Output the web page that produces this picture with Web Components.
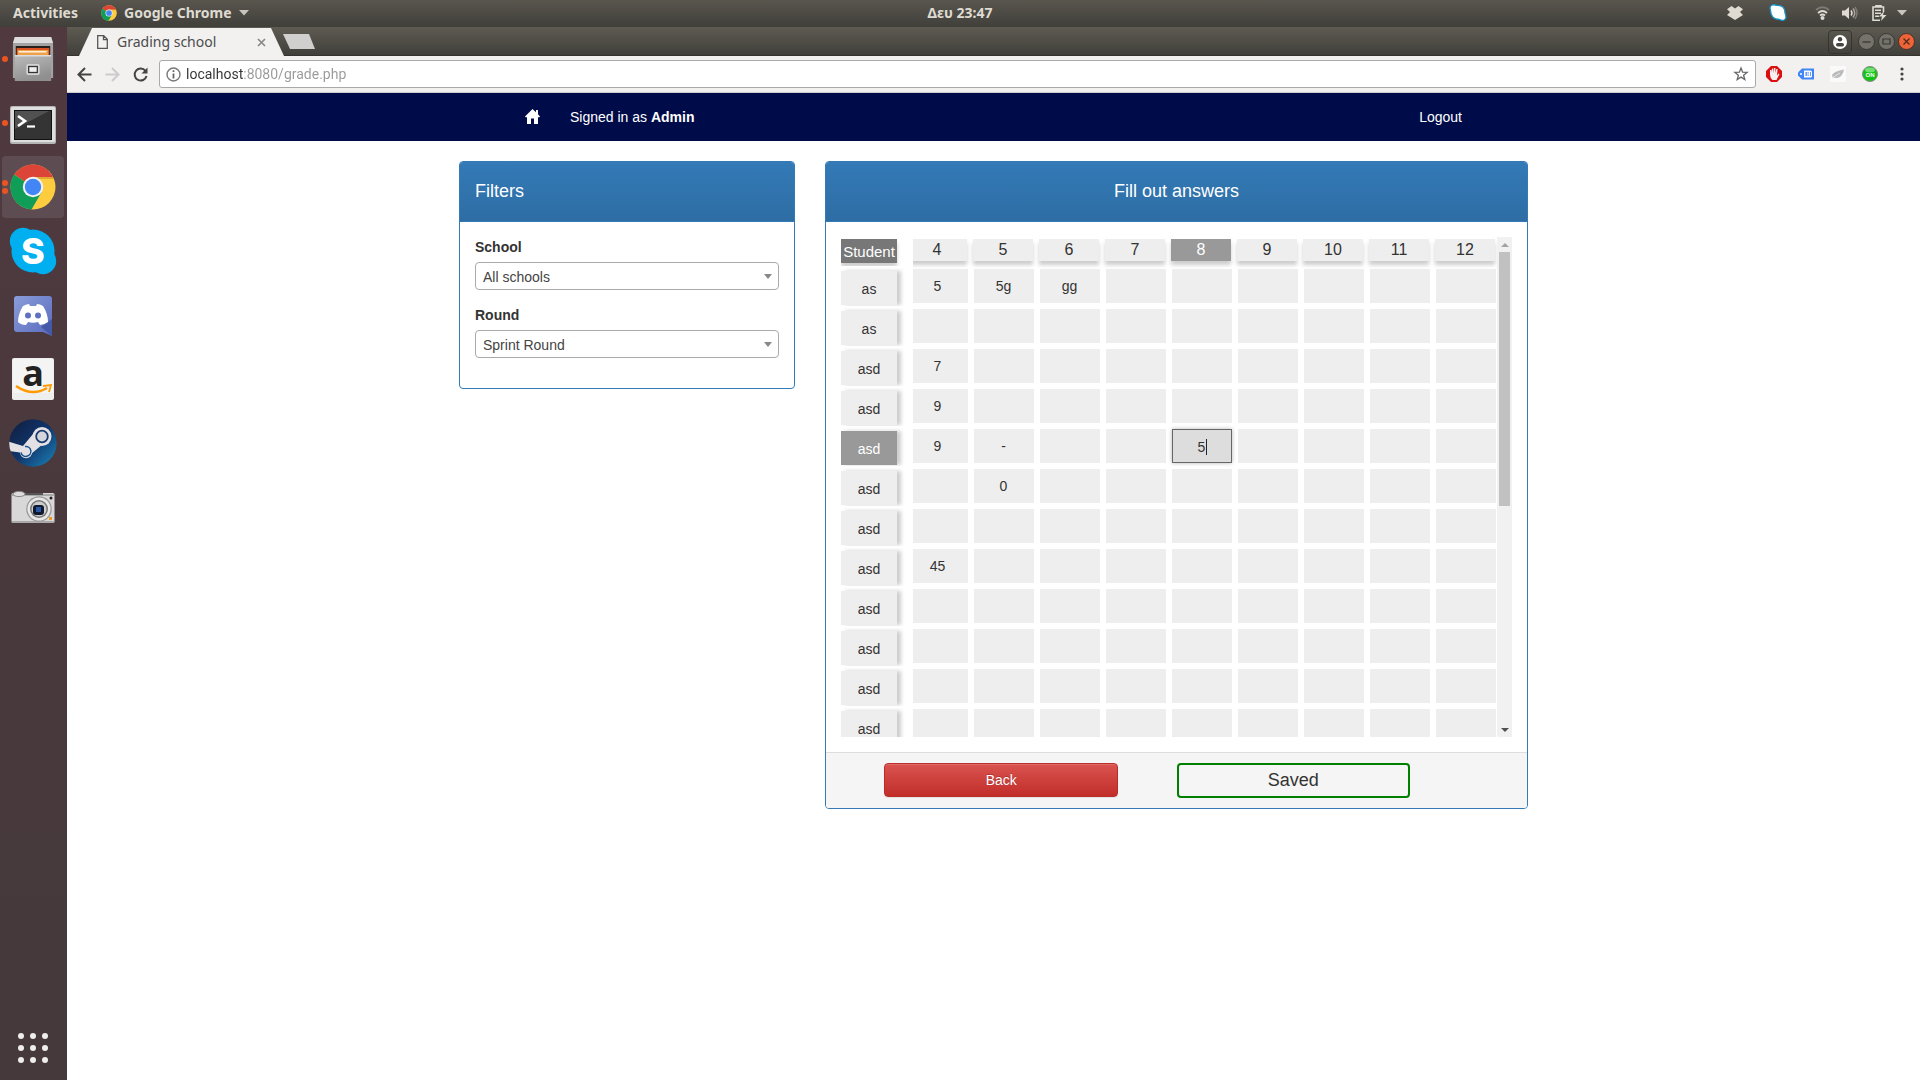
<!DOCTYPE html>
<html lang="en">
<head>
<meta charset="utf-8">
<title>Grading school</title>
<style>
  body { margin: 0; background: #fff; color: #333; font: 14px/20px "Liberation Sans", Arial, sans-serif; }
</style>
</head>
<body>
<desktop-shell>
  <top-bar slot="top"></top-bar>
  <side-dock slot="dock"></side-dock>
  <browser-tabs></browser-tabs>
  <browser-toolbar></browser-toolbar>
  <app-nav></app-nav>
  <page-columns>
    <app-panel slot="side">
      <span slot="title">Filters</span>
      <filter-select name="School" value="All schools"></filter-select>
      <filter-select name="Round" value="Sprint Round"></filter-select>
    </app-panel>
    <app-panel slot="main" centered>
      <span slot="title">Fill out answers</span>
      <answers-grid></answers-grid>
      <panel-actions slot="footer"></panel-actions>
    </app-panel>
  </page-columns>
</desktop-shell>

<script>
const define = (name, html, setup) => {
  const template = document.createElement('template');
  template.innerHTML = '<style>:host,*{box-sizing:border-box}button{font:inherit;padding:0;border:0;background:none;color:inherit;cursor:pointer}svg{display:block;flex:none;overflow:visible}</style>' + html;
  customElements.define(name, class extends HTMLElement {
    connectedCallback() {
      if (this.shadowRoot) return;
      const root = this.attachShadow({ mode: 'open' });
      root.append(template.content.cloneNode(true));
      if (setup) setup(root, this);
    }
  });
};

const chromeLogo = size => `<svg width="${size}" height="${size}" viewBox="0 0 46 46" aria-hidden="true">
  <circle cx="23" cy="23" r="22.5" fill="#fdcc3f"/>
  <path d="M23 23 4.2 10.6A22.5 22.5 0 0 1 43 13H23Z" fill="#db4437"/>
  <path d="M23 23 4.2 10.6A22.5 22.5 0 0 0 21.500 45.500L31.700 28Z" fill="#109d58"/>
  <path d="M23 13h20l.8 2H26Z" fill="#8a3a10" opacity=".25"/>
  <circle cx="23" cy="23" r="10.200" fill="#f2f2f2"/><circle cx="23" cy="23" r="8.200" fill="#4285f4"/></svg>`;

define('desktop-shell', `<style>
  :host { display: flex; flex-direction: column; min-height: 100vh; }
  .row { display: flex; flex: 1; }
  main { flex: 1; min-width: 0; display: flex; flex-direction: column; }
</style>
<slot name="top"></slot>
<div class="row"><slot name="dock"></slot><main><slot></slot></main></div>`);

define('top-bar', `<style>
  :host { display: grid; grid-template-columns: 1fr auto 1fr; align-items: center; height: 27px; padding: 0 13px 1px;
    background: linear-gradient(#59564e, #403f3a); color: #dfdbd2; font: bold 14px/20px "Noto Sans", sans-serif; }
  .left, .right { display: flex; align-items: center; }
  .right { justify-content: flex-end; }
  .app { display: flex; align-items: center; margin-left: 23px; gap: 7px; }
  .drop { margin-right: 26px; } .skype { margin-right: 28px; } .wifi { margin-right: 12px; } .vol { margin-right: 14px; } .bat { margin-right: 10px; }
</style>
<div class="left"><button>Activities</button>
 <button class="app">${chromeLogo(16)}<span>Google Chrome</span><svg width="10" height="6"><path d="M0 0h10L5 5.500Z" fill="#c9c5bd"/></svg></button></div>
<button>Δευ 23:47</button>
<div class="right">
 <svg class="drop" width="16" height="14" viewBox="0 0 16 14"><path d="M4.500 0 8 2.500 11.500 0 16 3.200 13 6l3 3-4 2.400L8 14l-4-2.600L0 9l3-3-3-2.800Z" fill="#dfdbd2"/></svg>
 <svg class="skype" width="18" height="18" viewBox="0 0 18 18"><path d="M1.500 6.500Q0 2 3.500 1q2-.6 4 .4Q16 1 16 9q2.500 6-1.500 7.300-2 .4-4-.8Q2 15.500 1.500 6.500Z" fill="#fff" stroke="#1593c9" stroke-width="1.300"/></svg>
 <svg class="wifi" width="15" height="14" viewBox="0 0 15 14" fill="none"><path d="M1 4Q7.500-1.500 14 4" stroke="#7d7b75" stroke-width="2"/><path d="M3 7q4.500-4 9 0M5 9.500q2.500-2 5 0" stroke="#dfdbd2" stroke-width="1.700"/><circle cx="7.500" cy="12" r="2" fill="#dfdbd2"/></svg>
 <svg class="vol" width="16" height="14" viewBox="0 0 16 14" fill="none"><path d="M0 4.500h3L7 1v12L3 9.500H0Z" fill="#dfdbd2"/><path d="M9 4.500q2 2.500 0 5" stroke="#dfdbd2" stroke-width="1.500"/><path d="M11 2.500q3.500 4.500 0 9" stroke="#aaa7a0" stroke-width="1.500"/><path d="M13 1q4 6 0 12" stroke="#7d7b75" stroke-width="1.500"/></svg>
 <svg class="bat" width="15" height="16" viewBox="0 0 15 16"><path d="M4 2V.7h5V2h2.500v5M8 15.200H1V2h10" fill="none" stroke="#dfdbd2" stroke-width="1.600"/><path d="M3 4.500h6v1.600H3zm0 3h6v1.600H3zm0 3h4v1.600H3zM12 6l-5 5.500h3L9 16l5.500-6H11Z" fill="#dfdbd2"/></svg>
 <svg width="10" height="6"><path d="M0 0h10L5 5.500Z" fill="#c9c5bd"/></svg>
</div>`);

define('side-dock', `<style>
  :host { display: flex; flex-direction: column; width: 67px; background: linear-gradient(#50393f, #47393c 60%, #46393c); }
  button { position: relative; height: 64px; width: 66px; padding: 1px 2px; display: block; }
  .tile { display: flex; width: 62px; height: 62px; align-items: center; justify-content: center; border-radius: 4px; }
  .on .tile { background: #5d4d53; }
  .dots { position: absolute; left: 2px; top: 0; height: 64px; display: flex; flex-direction: column; justify-content: center; gap: 2px; }
  .dots i { width: 6px; height: 6px; border-radius: 3px; background: #eb5421; }
  .apps { margin-top: auto; }
</style>
<button aria-label="Files"><span class="tile"><svg width="44" height="46" viewBox="0 0 46 46" preserveAspectRatio="none">
 <defs><linearGradient id="m" x2=".4" y2="1"><stop stop-color="#bcbcbc"/><stop offset="1" stop-color="#8f8f8f"/></linearGradient></defs>
 <path d="M4 1h38l2 7v34H2V8Z" fill="#a3a3a3"/><path d="M4 1h38l2 6H2Z" fill="#ddd"/><path d="M5 10h36v11H5Z" fill="#26201d"/><path d="M6 12h34v9H6Z" fill="#d9521f"/><path d="M7 14h32v7H7Z" fill="#f0a04b"/><path d="M8 15h29v1.500H8Z" fill="#fff2dc"/>
 <path d="M4 19h38v26H4Z" fill="url(#m)"/><path d="M4 19h38v1.500H4Z" fill="#dcdcdc"/><rect x="16" y="28" width="14" height="11" rx="2" fill="#d4d4d4"/><rect x="18.500" y="30.500" width="9" height="6" fill="#eee" stroke="#333" stroke-width="1.300"/></svg></span><span class="dots"><i></i></span></button>
<button aria-label="Terminal"><span class="tile"><svg width="46" height="44" viewBox="0 -4 46 44">
 <rect y="1" width="46" height="38" rx="2" fill="#b5b5b5"/><rect x="1" y="2" width="44" height="35" rx="1" fill="#dedede"/><rect x="4" y="5" width="38" height="30" fill="#111"/><rect x="5" y="6" width="36" height="28" fill="#343434"/><path d="M5 6h34L5 24Z" fill="#666" opacity=".6"/>
 <path d="m8 11 7 5-7 5" fill="none" stroke="#fff" stroke-width="2.600"/><path d="M17 21.500h8" stroke="#fff" stroke-width="2.200"/></svg></span><span class="dots"><i></i></span></button>
<button class="on" aria-label="Google Chrome"><span class="tile">${chromeLogo(46)}</span><span class="dots"><i></i><i></i></span></button>
<button aria-label="Skype"><span class="tile"><svg width="48" height="48" viewBox="0 0 48 48"><g fill="#00aff0"><circle cx="24" cy="24" r="21.500"/><circle cx="14" cy="14" r="13.200"/><circle cx="34" cy="34" r="13.200"/></g>
 <text x="24" y="37" text-anchor="middle" font-family="Inter, sans-serif" font-weight="800" font-size="36" fill="#fff">S</text></svg></span></button>
<button aria-label="Discord"><span class="tile"><svg width="40" height="44" viewBox="0 -2 40 44"><defs><linearGradient id="d" y2="1"><stop stop-color="#8a9cd9"/><stop offset="1" stop-color="#596bbd"/></linearGradient></defs>
 <path d="M4 1h32q3 0 3 3v37l-9-4H4q-3 0-3-3V4q0-3 3-3Z" fill="url(#d)"/><path d="m28 32 11 9V24Z" fill="#4559a8"/>
 <path d="M10 11q4-2 6-2l1 2h6l1-2q3 0 6 2 5 8 5 16-4 3-8 3l-2-3q-5 1.500-10 0l-2 3q-5 0-8-3 0-8 5-16Z" fill="#fff"/><circle cx="15" cy="20.500" r="3" fill="#5f72c2"/><circle cx="25" cy="20.500" r="3" fill="#5f72c2"/></svg></span></button>
<button aria-label="Amazon"><span class="tile"><svg width="42" height="42" viewBox="0 0 42 42"><rect width="42" height="42" rx="2" fill="#eee"/><rect x="1" y="1" width="40" height="34" fill="#f4f4f4"/>
 <text x="21" y="28" text-anchor="middle" font-family="Open Sans,sans-serif" font-weight="bold" font-size="36" fill="#222">a</text>
 <path d="M4 28q16 11 31 2" fill="none" stroke="#f90" stroke-width="2.600"/><path d="m31 28 8-1-2 7" fill="none" stroke="#f90" stroke-width="1.800"/></svg></span></button>
<button aria-label="Steam"><span class="tile"><svg width="48" height="48" viewBox="0 0 48 48"><defs><linearGradient id="s" y2="1"><stop stop-color="#101c3c"/><stop offset=".5" stop-color="#10356b"/><stop offset="1" stop-color="#1b87bc"/></linearGradient><clipPath id="c"><circle cx="24" cy="24" r="23.800"/></clipPath></defs>
 <g clip-path="url(#c)"><circle cx="24" cy="24" r="24" fill="url(#s)"/><path d="m-2 22 16 5 10-12 10 10-12 10L0 32Z" fill="#e4e1e4"/></g>
 <circle cx="33" cy="17.500" r="9.500" fill="#e4e1e4"/><circle cx="33" cy="17.500" r="5.800" fill="#d5d5dc" stroke="#153a6e" stroke-width="1.800"/><circle cx="17" cy="33" r="6.200" fill="#e4e1e4"/><path d="M12 33.500a5 5 0 1 0 4-6" fill="none" stroke="#15518c" stroke-width="1.500"/></svg></span></button>
<button aria-label="Camera"><span class="tile"><svg width="44" height="34" viewBox="0 0 44 34"><rect x=".5" y="3" width="43" height="30" rx="1.500" fill="#d8d8d8"/><path d="M1 4h42v2H1Zm0 27h42v2H1Z" fill="#aaa"/><path d="M14 3h18v2H14Z" fill="#555"/><ellipse cx="8" cy="4" rx="6" ry="2.600" fill="#ddd" stroke="#888"/>
 <circle cx="28" cy="19" r="12.800" fill="#999"/><circle cx="28" cy="19" r="11.500" fill="#e8e8e8"/><circle cx="28" cy="19" r="9" fill="#777"/><circle cx="28" cy="19" r="7.500" fill="#ccc"/><rect x="22" y="15" width="11" height="10" rx="3" fill="#10182c"/><rect x="25" y="17" width="5" height="5" fill="#2756a5"/><rect x="38" y="27" width="3" height="3" fill="#f39a1e"/><circle cx="40" cy="8" r="1.500" fill="#222"/></svg></span></button>
<button class="apps" aria-label="Show applications"><span class="tile"><svg width="30" height="30" viewBox="0 0 30 30" fill="#eee"><circle cx="3" cy="3" r="3"/><circle cx="15" cy="3" r="3"/><circle cx="27" cy="3" r="3"/><circle cx="3" cy="15" r="3"/><circle cx="15" cy="15" r="3"/><circle cx="27" cy="15" r="3"/><circle cx="3" cy="27" r="3"/><circle cx="15" cy="27" r="3"/><circle cx="27" cy="27" r="3"/></svg></span></button>`);

define('browser-tabs', `<style>
  :host { display: flex; align-items: center; height: 29px; padding: 0 5px 0 12px; background: linear-gradient(#5e5b52, #403f3a 28px, #34332f 28px); }
  .tab { align-self: flex-end; display: flex; align-items: center; width: 205px; height: 28px; padding: 0 18px; color: #4c4c4c;
    background: #f2f1f0; clip-path: polygon(0 100%, 13px 0, 192px 0, 100% 100%); font: 14px/20px "Noto Sans", sans-serif; }
  .title { flex: 1; margin-left: 9px; }
  .new { width: 32px; height: 15px; background: #d0cfcd; clip-path: polygon(0 0, 26px 0, 100% 100%, 7px 100%); margin-left: -1px; }
  .who { display: flex; align-items: center; justify-content: center; margin-left: auto; width: 24px; height: 24px; border: 1px solid #35342f; border-radius: 4px; }
  .win { display: flex; gap: 3px; margin-left: 6px; }
</style>
<div class="tab"><svg width="11" height="14" viewBox="0 0 11 14" fill="none" stroke="#555" stroke-width="1.300"><path d="M.7.7h6l3.600 3.600v9H.7ZM6.500.7v4h4"/></svg>
 <span class="title">Grading school</span>
 <button aria-label="Close tab"><svg width="9" height="9"><path d="m1 1 7 7m0-7-7 7" stroke="#888" stroke-width="1.700"/></svg></button></div>
<button class="new" aria-label="New tab"></button>
<button class="who" aria-label="Profile"><svg width="14" height="14" viewBox="0 0 14 14"><circle cx="7" cy="7" r="7" fill="#fff"/><circle cx="7" cy="4.300" r="2.200" fill="#45443f"/><rect x="3" y="8" width="8" height="3.600" rx="1.800" fill="#45443f"/></svg></button>
<div class="win">
 <button aria-label="Minimize"><svg width="17" height="17" viewBox="0 0 17 17"><circle cx="8.500" cy="8.500" r="8" fill="#74726b" stroke="#383733"/><path d="M4.500 9h8" stroke="#383733" stroke-width="1.300"/></svg></button>
 <button aria-label="Maximize"><svg width="17" height="17" viewBox="0 0 17 17"><circle cx="8.500" cy="8.500" r="8" fill="#74726b" stroke="#383733"/><path d="M5 6h7v5H5Z" fill="none" stroke="#383733" stroke-width="1.200"/></svg></button>
 <button aria-label="Close"><svg width="17" height="17" viewBox="0 0 17 17"><circle cx="8.500" cy="8.500" r="8" fill="#ee6439" stroke="#4b3028"/><path d="m5.500 5.500 6 6m0-6-6 6" stroke="#5a2b1b" stroke-width="1.400"/></svg></button>
</div>`);

define('browser-toolbar', `<style>
  :host { display: flex; align-items: center; height: 37px; padding: 0 10px; background: #f2f1f0; border-bottom: 1px solid #d0cecc; }
  .nav { display: flex; gap: 13px; margin-right: 11px; }
  label { flex: 1; display: flex; align-items: center; height: 28px; padding: 0 7px 0 6px; background: #fff; border: 1px solid #a9a9a9; border-radius: 3px; }
  input { flex: 1; min-width: 0; margin-left: 5px; padding: 0; border: 0; outline: 0; font: 14px/20px Roboto, sans-serif; color: transparent;
    background: linear-gradient(90deg, #333 57px, #999 57px); -webkit-background-clip: text; background-clip: text; }
  .ext { display: flex; align-items: center; gap: 16px; margin-left: 10px; }
</style>
<div class="nav">
 <button aria-label="Back"><svg width="15" height="15" viewBox="0 0 15 15"><path d="M14.500 7.500H2M8 1 1.500 7.500 8 14" fill="none" stroke="#444" stroke-width="2"/></svg></button>
 <button aria-label="Forward"><svg width="15" height="15" viewBox="0 0 15 15"><path d="M.5 7.500H13M7 1l6.500 6.500L7 14" fill="none" stroke="#ccc" stroke-width="2"/></svg></button>
 <button aria-label="Reload"><svg width="15" height="15" viewBox="0 0 15 15"><path d="M12.500 4A6 6 0 1 0 13.500 9" fill="none" stroke="#444" stroke-width="2"/><path d="M14.500.5v6h-6Z" fill="#444"/></svg></button>
</div>
<label><svg width="15" height="15" viewBox="0 0 15 15"><circle cx="7.500" cy="7.500" r="6.500" fill="none" stroke="#777" stroke-width="1.400"/><path d="M6.600 3.300h1.800v1.800H6.600Zm0 3.200h1.800v5H6.600Z" fill="#666"/></svg>
 <input aria-label="Address" value="localhost:8080/grade.php">
 <svg width="14" height="14" viewBox="0 0 14 14"><path d="m7 1 1.600 4.200 4.500.2-3.500 2.800 1.200 4.400L7 10.100l-3.800 2.500 1.200-4.400L.9 5.400l4.500-.2Z" fill="none" stroke="#666" stroke-width="1.300"/></svg></label>
<div class="ext">
 <svg width="16" height="16" viewBox="0 0 16 16"><path d="M5 0h6l5 5v6l-5 5H5l-5-5V5Z" fill="#d9100f"/><path d="M4 8.500V4h1.400v3L6 2.500h1.300L7.600 7l.5-5h1.300v5l.9-4h1.300L11 9.500l1.600-2 .9.600-3 6H6.500Q4 12 4 8.500Z" fill="#f6f0f0"/></svg>
 <svg width="16" height="16" viewBox="0 0 16 16"><path d="M4 2.500h12v11H4L0 9.500v-3Z" fill="#4285f4"/><path d="M6 4.500h6.500q1.500 0 1.500 1.500v4q0 1.500-1.500 1.500H6Z" fill="#fff"/><path d="M7.500 6h1.300v4H7.500Zm2 .3h1.300v1.300H9.500Zm0 2.100h1.300v1.300H9.500ZM12 6h.8v4H12Z" fill="#4285f4"/><circle cx="3" cy="8" r="1" fill="#fff"/></svg>
 <svg width="16" height="16" viewBox="0 0 16 16"><path d="M0 0h16v16H0Z" fill="#fafafa"/><path d="M2 9q2-4 12-5.500Q12.500 12 6 12q-4 0-4-3Z" fill="#bbb"/><path d="m2 12 8-5" stroke="#e5e5e5"/></svg>
 <svg width="16" height="16" viewBox="0 0 16 16"><circle cx="8" cy="8" r="7.500" fill="#12c412" stroke="#8a8a8a"/><ellipse cx="8" cy="4" rx="5" ry="2.500" fill="#6fe06f"/><text x="8" y="10.500" text-anchor="middle" font-family="Liberation Sans, sans-serif" font-size="6" font-weight="bold" fill="#fff">ON</text></svg>
 <button aria-label="Menu"><svg width="16" height="14" viewBox="0 0 16 14" fill="#444"><circle cx="8" cy="2" r="1.600"/><circle cx="8" cy="7" r="1.600"/><circle cx="8" cy="12" r="1.600"/></svg></button>
</div>`);

define('app-nav', `<style>
  :host { display: block; background: #000c49; color: #fff; }
  nav { display: flex; align-items: center; height: 48px; max-width: 937px; margin: 0 auto; }
  p { margin: 0 0 0 30px; } a { color: inherit; text-decoration: none; } .out { margin-left: auto; }
</style>
<nav><a href="#" aria-label="Home"><svg width="15" height="16" viewBox="0 0 15 16"><path d="M7.500 0 11 3.300V1h2v4.200L15 7.500l-.7.700H13V15H9V9.500H6V15H2V8.200H.7L0 7.500Z" fill="#fff"/></svg></a>
<p>Signed in as <b>Admin</b></p><a class="out" href="#">Logout</a></nav>`);

define('page-columns', `<style>
  :host { display: flex; align-items: flex-start; width: 100%; max-width: 1099px; margin: 20px auto; }
  div { min-width: 0; padding: 0 15px; }
  .side { flex: 0 1 366px; } .wide { flex: 1 1 0; }
</style><div class="side"><slot name="side"></slot></div><div class="wide"><slot name="main"></slot></div>`);

define('app-panel', `<style>
  :host { display: block; border: 1px solid #337ab7; border-radius: 4px; }
  header { height: 60px; padding: 19px 15px 20px; border-bottom: 1px solid #337ab7; border-radius: 3px 3px 0 0; background: linear-gradient(#337ab7, #2e6da4); color: #fff; }
  :host([centered]) header { text-align: center; }
  h3 { margin: 0; font-size: 18px; line-height: 20px; font-weight: normal; }
  .body { padding: 15px; }
</style><header><h3><slot name="title"></slot></h3></header><div class="body"><slot></slot></div><slot name="footer"></slot>`);

define('filter-select', `<style>
  :host { display: block; margin-bottom: 15px; }
  label { display: block; margin-bottom: 5px; font-weight: bold; }
  select { display: block; width: 100%; height: 28px; padding: 2px 20px 0 7px; border: 1px solid #aaa; border-radius: 4px; background: none; appearance: none; color: #444; font: inherit; }
  .box { display: grid; align-items: center; }
  .box > * { grid-area: 1 / 1; }
  svg { justify-self: end; margin-right: 7px; pointer-events: none; }
</style><label for="s"></label><div class="box"><select id="s"><option></option></select><svg width="8" height="5"><path d="M0 0h8L4 5Z" fill="#888"/></svg></div>`,
(root, host) => {
  root.querySelector('label').textContent = host.getAttribute('name');
  root.querySelector('option').textContent = host.getAttribute('value');
});

define('scroll-rail', `<style>
  :host { display: flex; flex-direction: column; align-items: center; width: 15px; background: #f1f1f1; }
  span { display: flex; width: 15px; height: 15px; align-items: center; justify-content: center; }
  .track { flex: 1; width: 11px; } .thumb { height: 54%; background: #c1c1c1; }
</style><span><svg width="8" height="4"><path d="M4 0 8 4H0Z" fill="#a3a3a3"/></svg></span><div class="track"><div class="thumb"></div></div><span><svg width="8" height="4"><path d="M0 0h8L4 4Z" fill="#505050"/></svg></span>`);

define('answers-grid', `<style>
  :host { display: flex; height: 500px; }
  .view { flex: 1; min-width: 0; overflow: hidden; }
  table { table-layout: fixed; width: 658px; border-collapse: separate; border-spacing: 0; }
  th, td { padding: 0; font-weight: normal; text-align: center; vertical-align: top; }
  .first { width: 64px; }
  thead th { height: 29px; padding: 2px 4px 0 2px; font-size: 16px; }
  thead div { height: 22px; line-height: 22px; background: #eee; box-shadow: 0 4px 4px rgba(0,0,0,.2); }
  thead .current, tbody .current { background: #999; color: #fff; }
  tr > :first-child { position: relative; z-index: 1; padding-left: 0; padding-right: 8px; background: #fff; box-shadow: 8px 0 0 #fff; }
  thead .student { height: 24px; line-height: 26px; font-size: 15px; background: #777; color: #fff; }
  tbody th { height: 40px; padding-top: 5px; }
  tbody th div { height: 34px; line-height: 36px; background: #eee; box-shadow: 4px 0 4px rgba(0,0,0,.2); }
  tbody td { padding: 3px; }
  input { display: block; width: 100%; height: 34px; padding: 0 4px 0 3px; border: 0; background: #eee; color: #333; font: inherit; text-align: center; outline: 0; }
  .edit { position: relative; }
  .edit input { border: 1px solid #666; background: #ddd; box-shadow: 0 0 4px rgba(0,0,0,.3); padding-top: 2px; }
  .edit::after { content: ""; position: absolute; left: 37px; top: 13px; width: 1px; height: 16px; background: #222; }
</style>
<div class="view"><table><thead><tr><th class="first" scope="col"><div class="student">Student</div></th></tr></thead><tbody></tbody></table></div>
<scroll-rail></scroll-rail>`,
root => {
  const questions = [4, 5, 6, 7, 8, 9, 10, 11, 12];
  const rows = [['as', '5', '5g', 'gg'], ['as'], ['asd', '7'], ['asd', '9'], ['asd', '9', '-', '', '', '5'], ['asd', '', '0'],
    ['asd'], ['asd', '45'], ['asd'], ['asd'], ['asd'], ['asd']];
  const current = { row: 4, question: 8 };
  root.querySelector('thead tr').insertAdjacentHTML('beforeend',
    questions.map(q => `<th scope="col"><div${q === current.question ? ' class="current"' : ''}>${q}</div></th>`).join(''));
  root.querySelector('tbody').innerHTML = rows.map(([name, ...answers], r) =>
    `<tr><th scope="row"><div${r === current.row ? ' class="current"' : ''}>${name}</div></th>` +
    questions.map((q, i) => `<td${r === current.row && q === current.question ? ' class="edit"' : ''}><input aria-label="${name}, question ${q}" value="${answers[i] || ''}"></td>`).join('') + '</tr>').join('');
});

define('panel-actions', `<style>
  :host { display: grid; grid-template-columns: repeat(12, 1fr); align-items: start; padding: 10px 0; border-top: 1px solid #ddd; border-radius: 0 0 3px 3px; background: #f5f5f5; }
  .back { grid-column: 2 / span 4; height: 34px; border: 1px solid #b92c28; border-radius: 4px; color: #fff; background: linear-gradient(#d9534f, #c12e2a);
    text-shadow: 0 -1px 0 rgba(0,0,0,.2); box-shadow: inset 0 1px 0 rgba(255,255,255,.15), 0 1px 1px rgba(0,0,0,.075); }
  .saved { grid-column: 7 / span 4; height: 35px; border: 2px solid green; border-radius: 4px; font-size: 18px; line-height: 30px; text-align: center; }
</style><button class="back">Back</button><div class="saved" role="status">Saved</div>`);
</script>
</body>
</html>
